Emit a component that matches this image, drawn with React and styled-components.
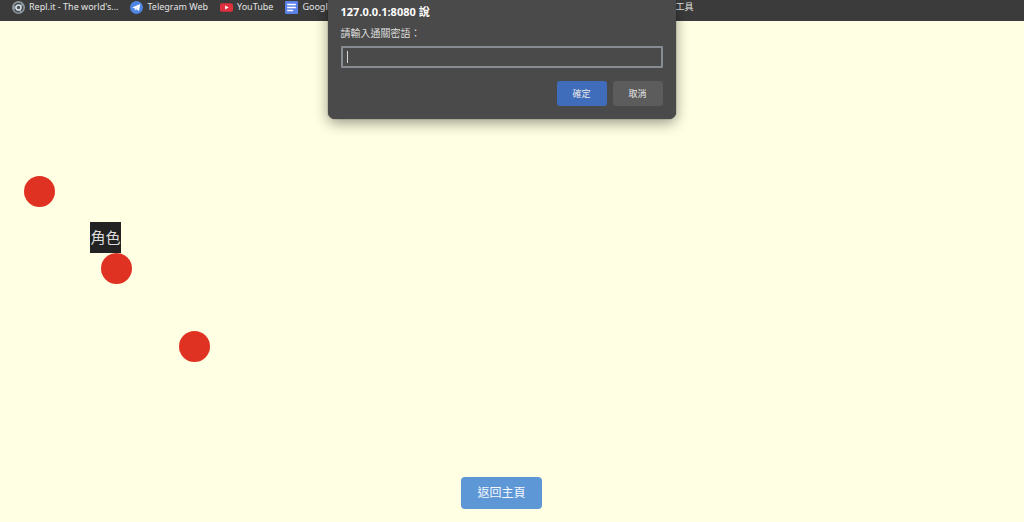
import React, { useState } from "react";
import styled, { createGlobalStyle } from "styled-components";

const balls = [
  { id: 1, x: 24, y: 155 },
  { id: 2, x: 101, y: 232 },
  { id: 3, x: 179, y: 310 },
];

function ReplIcon() {
  return (
    <Icon viewBox="0 0 24 24" aria-hidden="true">
      <circle cx="12" cy="12" r="12" fill="#8d979d" />
      <path d="M5 9a8 8 0 0 1 12-3M19 9a8 8 0 0 1-2 9M14 20a8 8 0 0 1-9-5" fill="none" stroke="#434c51" strokeWidth="2.500" />
      <circle cx="12" cy="12" r="4.500" fill="#4a5358" stroke="#dfe4e6" strokeWidth="2.500" />
    </Icon>
  );
}

function TelegramIcon() {
  return (
    <Icon viewBox="0 0 24 24" aria-hidden="true">
      <circle cx="12" cy="12" r="12" fill="#4f86e3" />
      <path d="M4 12 19 5.500 16.500 18.500 11.500 15 9 17.500 8.500 13.500Z" fill="#fff" />
      <path d="M9 17.500 9.800 13.800 15 9.500 11.500 15Z" fill="#c3d7f7" />
    </Icon>
  );
}

function YouTubeIcon() {
  return (
    <Icon viewBox="0 0 24 24" aria-hidden="true">
      <rect x="0" y="4" width="24" height="16" rx="4" fill="#e02f3d" />
      <path d="M9.500 8.500 16 12 9.500 15.500Z" fill="#fff" />
    </Icon>
  );
}

function DocsIcon() {
  return (
    <Icon viewBox="0 0 24 24" aria-hidden="true">
      <rect width="24" height="24" rx="2" fill="#5b80e8" />
      <path d="M4 6.500h16M4 12h16M4 17.500h11" stroke="#fff" strokeWidth="3" />
    </Icon>
  );
}

function App() {
  const [answer, setAnswer] = useState("");

  return (
    <>
      <GlobalStyle />
      <BookmarkBar>
        <Bookmarks>
          <Bookmark href="#replit"><ReplIcon />Repl.it - The world's...</Bookmark>
          <Bookmark href="#telegram"><TelegramIcon />Telegram Web</Bookmark>
          <Bookmark href="#youtube"><YouTubeIcon />YouTube</Bookmark>
          <Bookmark href="#google"><DocsIcon />Google</Bookmark>
        </Bookmarks>
        <ToolsLink href="#tools">工具</ToolsLink>
      </BookmarkBar>
      <Game>
        {balls.map((ball) => (
          <Ball key={ball.id} $x={ball.x} $y={ball.y} />
        ))}
        <Player>角色</Player>
        <HomeButton type="button">返回主頁</HomeButton>
      </Game>
      <Overlay>
        <Prompt role="dialog" aria-labelledby="prompt-title" onSubmit={(e) => e.preventDefault()}>
          <Title id="prompt-title">127.0.0.1:8080 說</Title>
          <Label htmlFor="password">請輸入通關密語：</Label>
          <Field $empty={answer === ""}>
            <Input
              id="password"
              type="text"
              autoFocus
              autoComplete="off"
              value={answer}
              onChange={(e) => setAnswer(e.target.value)}
            />
          </Field>
          <Actions>
            <PromptButton type="submit" $primary>確定</PromptButton>
            <PromptButton type="button">取消</PromptButton>
          </Actions>
        </Prompt>
      </Overlay>
    </>
  );
}

export default App;

const GlobalStyle = createGlobalStyle`
  * {
    box-sizing: border-box;
  }
  body {
    margin: 0;
    background: #ffffe3;
    font-family: "Noto Sans", "Noto Sans CJK TC", sans-serif;
  }
  #root {
    position: relative;
    display: flex;
    flex-direction: column;
    min-height: 100vh;
  }
`;

const BookmarkBar = styled.nav`
  display: grid;
  grid-template-columns: minmax(0, 1fr) 348px minmax(0, 1fr);
  height: 21px;
  padding-right: 21px;
  background: #3b3b3b;
`;

const Bookmarks = styled.div`
  display: flex;
  align-items: flex-start;
  gap: 12px;
  padding-left: 12px;
`;

const Bookmark = styled.a`
  display: flex;
  flex-shrink: 0;
  align-items: center;
  gap: 4px;
  color: #e4e4e4;
  font-size: 9px;
  line-height: 14px;
  text-decoration: none;
  white-space: nowrap;
`;

const ToolsLink = styled(Bookmark)`
  grid-column: 3;
  align-self: start;
`;

const Icon = styled.svg`
  width: 13px;
  height: 13px;
`;

const Game = styled.main`
  position: relative;
  display: flex;
  flex: 1;
  align-items: flex-end;
  justify-content: center;
  padding: 0 21px 13px 0;
`;

const Ball = styled.div`
  position: absolute;
  left: ${(props) => props.$x}px;
  top: ${(props) => props.$y}px;
  width: 31px;
  height: 31px;
  border-radius: 50%;
  background: #df3222;
`;

const Player = styled.div`
  position: absolute;
  left: 90px;
  top: 201px;
  display: flex;
  align-items: center;
  justify-content: center;
  width: 31px;
  height: 31px;
  background: #222;
  color: #ddd;
  font-size: 15px;
  line-height: 31px;
`;

const HomeButton = styled.button`
  height: 32px;
  padding: 0 16px;
  border: 0;
  border-radius: 4px;
  background: #5e97d6;
  color: #f4f8fd;
  font-family: inherit;
  font-size: 12px;
  line-height: 16px;
  cursor: pointer;
`;

const Overlay = styled.div`
  position: absolute;
  top: 0;
  left: 0;
  right: 0;
  display: flex;
  justify-content: center;
  padding-right: 21px;
  pointer-events: none;
`;

const Prompt = styled.form`
  display: flex;
  flex-direction: column;
  width: 348px;
  padding: 4px 13px 13px;
  border-radius: 0 0 7px 7px;
  background: #4a4a4a;
  box-shadow: 0 4px 14px rgba(0, 0, 0, 0.4), 0 0 1px #222;
  pointer-events: auto;
`;

const Title = styled.h1`
  margin: 0 0 6px;
  color: #fff;
  font-size: 11px;
  font-weight: 700;
  line-height: 16px;
`;

const Label = styled.label`
  margin-bottom: 5px;
  color: #ddd;
  font-size: 10px;
  line-height: 15px;
`;

const Field = styled.div`
  position: relative;
  display: flex;

  &::after {
    content: "";
    display: ${(props) => (props.$empty ? "block" : "none")};
    position: absolute;
    left: 6px;
    top: 5px;
    width: 1px;
    height: 12px;
    background: #d8d8d8;
  }
`;

const Input = styled.input`
  width: 100%;
  height: 22px;
  padding: 0 4px;
  border: 2px solid #878c92;
  border-radius: 1px;
  outline: 0;
  background: #4a4a4a;
  color: #fff;
  caret-color: ${(props) => (props.value ? "#fff" : "transparent")};
  font-family: inherit;
  font-size: 10px;
`;

const Actions = styled.div`
  display: flex;
  justify-content: flex-end;
  gap: 6px;
  margin-top: 13px;
`;

const PromptButton = styled.button`
  width: 50px;
  height: 25px;
  padding: 0;
  border: 0;
  border-radius: 3px;
  background: ${(props) => (props.$primary ? "#3f6dbb" : "#5c5c5c")};
  color: #e8e8e8;
  font-family: inherit;
  font-size: 9px;
  cursor: pointer;
`;
